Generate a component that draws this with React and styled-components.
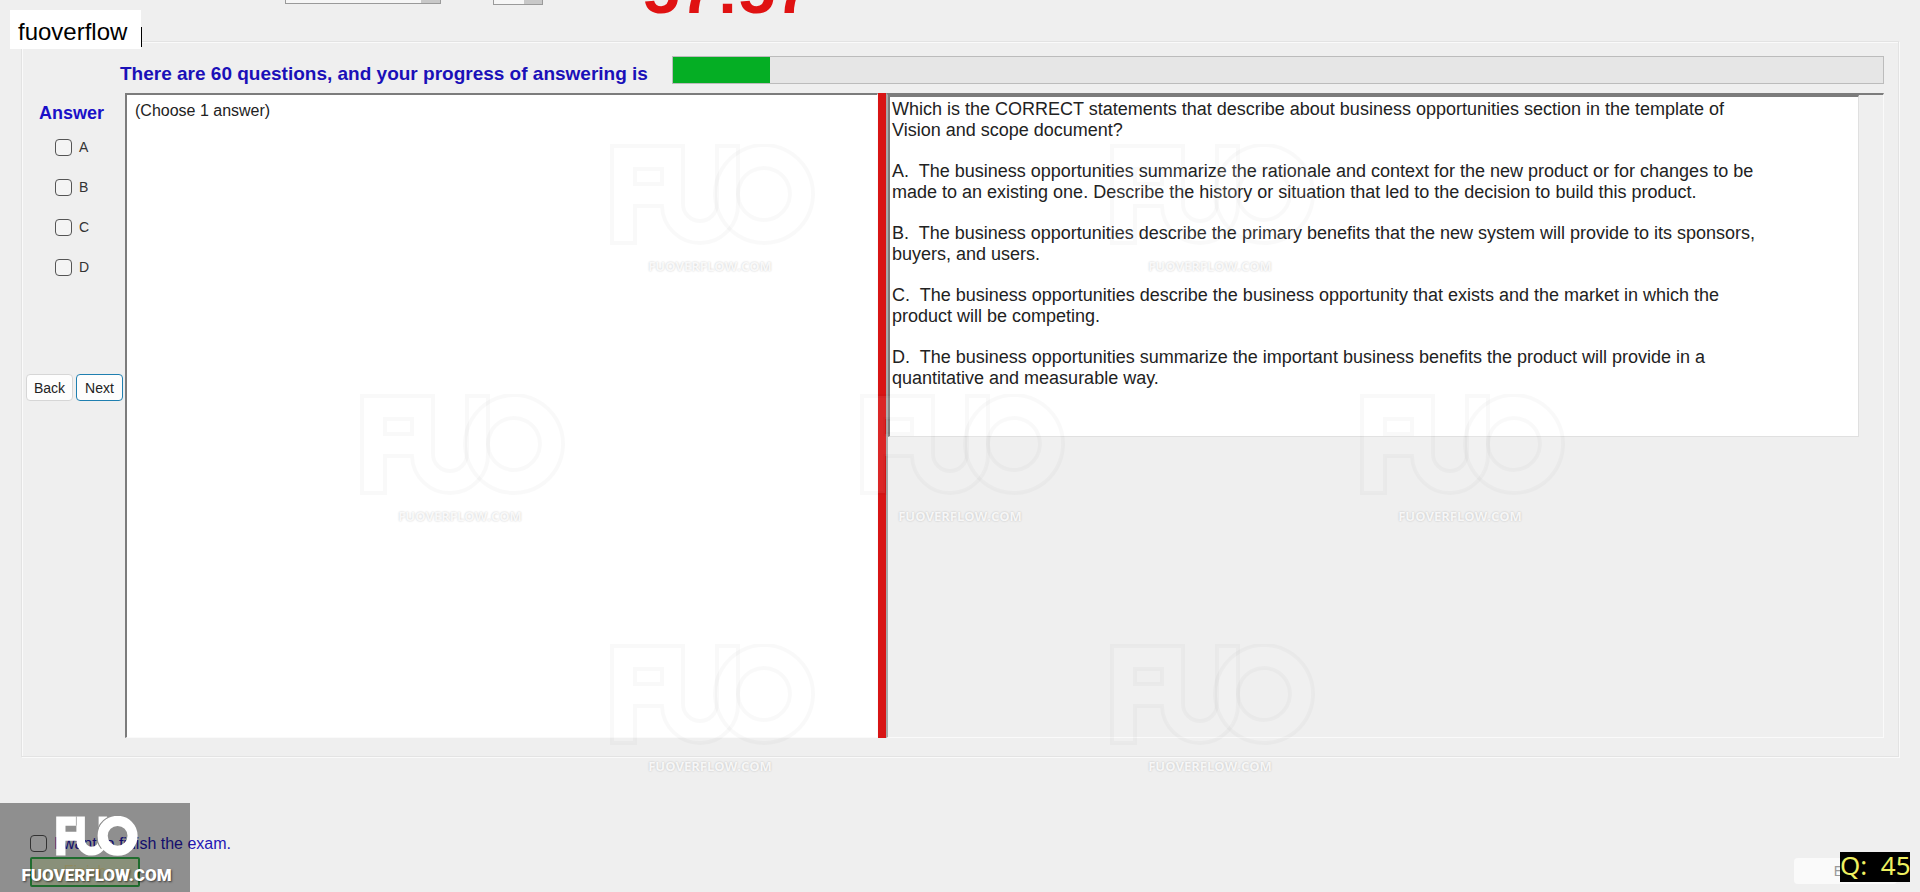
import React, { useState } from 'react';
import styled, { createGlobalStyle } from 'styled-components';

const GlobalStyle = createGlobalStyle`
  * { box-sizing:border-box; }
  body {
    margin:0;
    background:#efefef;
    font-family:"Liberation Sans", Arial, sans-serif;
    color:#222;
  }
  button, input, select { font-family:inherit; }
`;

const Page = styled.div`
  position:relative;
  min-height:100vh;
  display:flex;
  flex-direction:column;
  overflow:hidden;
`;

// the controls hang out of the top edge, only their bottoms show
const Header = styled.header`
  height:41px;
  padding-left:285px;
  display:flex;
  align-items:flex-end;
  overflow:hidden;
`;

const FontSelect = styled.select`
  width:156px;
  height:26px;
  margin:0 52px 37px 0;
  appearance:none;
  background:linear-gradient(#c8c8c8, #c8c8c8) right / 19px 100% no-repeat #f6f6f6;
  border:1px solid #9a9a9a;
`;

const SizeInput = styled.input`
  width:50px;
  height:26px;
  margin:0 100px 36px 0;
  background:linear-gradient(#c8c8c8, #c8c8c8) right / 18px 100% no-repeat #f6f6f6;
  border:1px solid #9a9a9a;
`;

const Clock = styled.div`
  margin-bottom:18px;
  font-size:66px;
  line-height:66px;
  font-weight:700;
  color:#e01212;
`;

const Tag = styled.div`
  position:absolute;
  top:10px;
  left:10px;
  padding:8px 14px 3px 8px;
  background:#fff;
  font-size:24px;
  line-height:28px;
  color:#000;

  &::after {
    content:"";
    position:absolute;
    right:-1px;
    top:17px;
    width:1px;
    height:20px;
    background:#000;
  }
`;

const Frame = styled.main`
  margin:0 21px;
  padding:14px 14px 18px 0;
  border:1px solid #e3e3e3;
  box-shadow:inset 1px 1px 0 #fafafa, 1px 1px 0 #fafafa;
`;

const ProgressRow = styled.div`
  height:28px;
  padding-left:98px;
  display:flex;
  align-items:flex-end;
  gap:24px;
`;

const Progress = styled.span`
  font-size:19px;
  line-height:20px;
  font-weight:700;
  color:#1a10b8;
  white-space:nowrap;
`;

const Track = styled.div`
  flex:1;
  height:28px;
  background:#e6e6e6;
  border:1px solid #bcbcbc;
`;

const Fill = styled.div`
  height:100%;
  background:#05ae24;
`;

const Workspace = styled.div`
  margin-top:9px;
  min-height:calc(100vh - 247px);
  display:grid;
  grid-template-columns:103px 753fr 8px 998fr;
`;

const Sidebar = styled.div`
  padding-top:10px;
`;

const Choices = styled.fieldset`
  margin:0;
  padding:0;
  border:0;
  display:flex;
  flex-direction:column;
  gap:23px;

  legend {
    width:100%;
    margin-bottom:16px;
    padding:0 4px 0 0;
    text-align:center;
    font-size:18px;
    line-height:20px;
    font-weight:700;
    color:#1a10c8;
  }
`;

const Check = styled.label`
  display:flex;
  align-items:center;
  gap:7px;
  padding-left:${p => p.$indent || 0}px;
  font-size:${p => p.$size || 14}px;
  line-height:17px;
  color:${p => p.$color || '#333'};

  input {
    appearance:none;
    width:17px;
    height:17px;
    margin:0;
    border:1px solid #555;
    border-radius:4px;
    background:#f4f4f4;
  }
  input:checked { background:#0067c0; }
`;

const Nav = styled.div`
  display:flex;
  gap:3px;
  margin-top:98px;
  padding-left:4px;
`;

const NavButton = styled.button`
  width:47px;
  height:27px;
  padding:0;
  background:#fdfdfd;
  border:1px solid ${p => (p.$active ? '#1f7fb0' : '#d6d6d6')};
  border-radius:4px;
  font-size:14px;
  color:#222;
`;

const Pane = styled.section`
  border:solid;
  border-width:2px 1px 1px 2px;
  border-color:#7c7c7c #fafafa #fafafa #7c7c7c;
`;

const AnswerPane = styled(Pane)`
  padding:6px 8px;
  background:#fff;
  font-size:16px;
  line-height:20px;
`;

const Splitter = styled.div`
  background:#d81414;
`;

const QuestionPane = styled(Pane)`
  border-left-color:#a8a8a8;
`;

const Question = styled.article`
  min-height:342px;
  margin-right:24px;
  padding:2px 92px 0 2px;
  background:#fff;
  border:solid;
  border-width:2px 1px 1px 2px;
  border-color:#7c7c7c #e0e0e0 #e0e0e0 #7c7c7c;

  p {
    margin:0 0 20px;
    font-size:18px;
    line-height:21px;
    white-space:pre-wrap;
  }
`;

const Footer = styled.footer`
  margin-top:auto;
  padding:0 23px 5px 30px;
  display:flex;
  justify-content:space-between;
  align-items:flex-end;
`;

const Finish = styled.div`
  display:flex;
  flex-direction:column;
  align-items:flex-start;
  gap:5px;
`;

const FinishButton = styled.button`
  width:110px;
  height:30px;
  padding:0;
  background:#e4f0cc;
  border:2px solid #35b44e;
  border-radius:2px;
  font-size:16px;
  color:#efe6a0;
`;

const ExitButton = styled.button`
  width:103px;
  height:26px;
  margin-bottom:3px;
  padding:0;
  background:#fafafa;
  border:0;
  border-radius:4px;
  font-size:14px;
  color:#999;
`;

const Stamp = styled.div`
  position:absolute;
  left:0;
  bottom:0;
  width:190px;
  height:89px;
  padding:13px 0 0 3px;
  display:flex;
  flex-direction:column;
  align-items:center;
  gap:8px;
  background:rgba(0,0,0,.4);
  color:#fff;
  font-family:Roboto, sans-serif;
  font-size:17px;
  line-height:22px;
  font-weight:900;
  text-shadow:1px 1px 2px rgba(0,0,0,.6);
`;

const Counter = styled.div`
  position:absolute;
  right:10px;
  bottom:10px;
  width:70px;
  height:30px;
  background:#000;
  color:#eef060;
  font-family:"Noto Sans", sans-serif;
  font-size:26px;
  line-height:26px;
  text-align:center;
  white-space:pre;
`;

const Watermark = styled.div`
  position:absolute;
  left:${p => p.$x}px;
  top:${p => p.$y}px;
  width:200px;
  display:flex;
  flex-direction:column;
  align-items:center;
  gap:10px;
  pointer-events:none;
  color:rgba(255,255,255,.85);
  font-family:"Open Sans", sans-serif;
  font-size:13px;
  line-height:20px;
  font-weight:700;
  text-shadow:0 0 2px rgba(0,0,0,.22);

  svg { margin-left:6px; }
`;

const FU = 'M0 0H71V58a17 17 0 0 0 34 0V0H126V58A38 38 0 0 1 50 60H23V97H0ZM23 23V38H50V23Z';

function Outline() {
  return (
    <svg width="206" height="102" viewBox="-2 -2 206 102" aria-hidden="true">
      <g fill="rgba(255,255,255,.08)" fillRule="evenodd" stroke="rgba(0,0,0,.022)" strokeWidth="4">
        <path d={FU} />
        <path d="M152 -1a49 49 0 1 0 .1 0ZM152 22a26 26 0 1 1 -.1 0Z" />
      </g>
    </svg>
  );
}

function Logo() {
  return (
    <svg width="82" height="40" viewBox="0 -1 202 99" aria-hidden="true">
      <path d={FU} fill="#fff" fillRule="evenodd" />
      <path d="M50 0V23" stroke="#999" strokeWidth="2" />
      <path d="M126 4A51 51 0 0 0 112 80" fill="none" stroke="#8f8f8f" strokeWidth="3" />
      <circle cx="152" cy="48" r="37" fill="none" stroke="#fff" strokeWidth="25" />
    </svg>
  );
}

const marks = [
  [610, 144], [1110, 144],
  [360, 394], [860, 394], [1360, 394],
  [610, 644], [1110, 644],
];

const question = [
  'Which is the CORRECT statements that describe about business opportunities section in the template of Vision and scope document?',
  'A.  The business opportunities summarize the rationale and context for the new product or for changes to be made to an existing one. Describe the history or situation that led to the decision to build this product.',
  'B.  The business opportunities describe the primary benefits that the new system will provide to its sponsors, buyers, and users.',
  'C.  The business opportunities describe the business opportunity that exists and the market in which the product will be competing.',
  'D.  The business opportunities summarize the important business benefits the product will provide in a quantitative and measurable way.',
];

export default function App() {
  const [picked, setPicked] = useState([]);
  const progress = 8;

  const toggle = c =>
    setPicked(picked.includes(c) ? picked.filter(x => x !== c) : [...picked, c]);

  return (
    <Page>
      <GlobalStyle />

      <Header>
        <FontSelect aria-label="Font" />
        <SizeInput aria-label="Size" />
        <Clock>57:57</Clock>
      </Header>

      <Frame>
        <ProgressRow>
          <Progress id="progress">There are 60 questions, and your progress of answering is</Progress>
          <Track role="progressbar" aria-labelledby="progress" aria-valuenow={progress}>
            <Fill style={{ width: `${progress}%` }} />
          </Track>
        </ProgressRow>

        <Workspace>
          <Sidebar>
            <Choices>
              <legend>Answer</legend>
              {['A', 'B', 'C', 'D'].map(c => (
                <Check key={c} $indent={33}>
                  <input type="checkbox" checked={picked.includes(c)} onChange={() => toggle(c)} />
                  {c}
                </Check>
              ))}
            </Choices>
            <Nav>
              <NavButton>Back</NavButton>
              <NavButton $active>Next</NavButton>
            </Nav>
          </Sidebar>

          <AnswerPane>(Choose 1 answer)</AnswerPane>
          <Splitter />
          <QuestionPane>
            <Question>
              {question.map(q => <p key={q}>{q}</p>)}
            </Question>
          </QuestionPane>
        </Workspace>
      </Frame>

      <Footer>
        <Finish>
          <Check $size={16} $color="#2416b4">
            <input type="checkbox" />
            I want to finish the exam.
          </Check>
          <FinishButton>Finish</FinishButton>
        </Finish>
        <ExitButton>Exit</ExitButton>
      </Footer>

      <Tag>fuoverflow</Tag>

      {marks.map(([x, y]) => (
        <Watermark key={`${x}-${y}`} $x={x} $y={y}>
          <Outline />
          FUOVERFLOW.COM
        </Watermark>
      ))}

      <Stamp>
        <Logo />
        FUOVERFLOW.COM
      </Stamp>
      <Counter>Q:  45</Counter>
    </Page>
  );
}
